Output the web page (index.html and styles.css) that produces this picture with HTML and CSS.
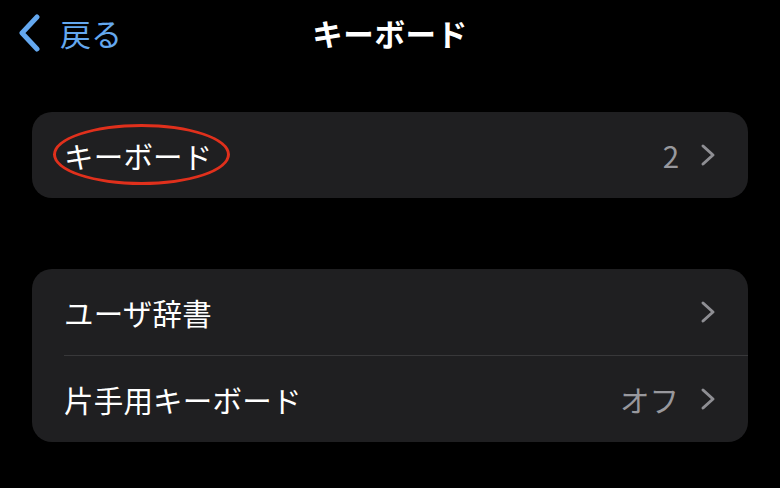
FILE: index.html
```html
<!DOCTYPE html>
<html lang="ja">
<head>
<meta charset="utf-8">
<link rel="stylesheet" href="styles.css">
</head>
<body>
<header class="nav">
  <div class="back">
    <svg class="back-chev" width="24" height="38" viewBox="0 0 24 38"><path d="M20 3 L5 19 L20 35" fill="none" stroke="#64a8ef" stroke-width="5" stroke-linecap="round" stroke-linejoin="round"/></svg>
    <span class="back-text">戻る</span>
  </div>
  <div class="title">キーボード</div>
  <div></div>
</header>
<main class="content">
  <section class="card">
    <div class="row">
      <div class="row-inner">
        <span class="label marked">キーボード</span>
        <span class="value">2</span>
        <svg class="chev" width="16" height="24" viewBox="0 0 16 24"><path d="M3 3 L13 12 L3 21" fill="none" stroke="#8e8e93" stroke-width="3" stroke-linecap="round" stroke-linejoin="round"/></svg>
      </div>
    </div>
  </section>
  <section class="card">
    <div class="row">
      <div class="row-inner">
        <span class="label">ユーザ辞書</span>
        <svg class="chev" width="16" height="24" viewBox="0 0 16 24"><path d="M3 3 L13 12 L3 21" fill="none" stroke="#8e8e93" stroke-width="3" stroke-linecap="round" stroke-linejoin="round"/></svg>
      </div>
    </div>
    <div class="row">
      <div class="row-inner sep">
        <span class="label">片手用キーボード</span>
        <span class="value">オフ</span>
        <svg class="chev" width="16" height="24" viewBox="0 0 16 24"><path d="M3 3 L13 12 L3 21" fill="none" stroke="#8e8e93" stroke-width="3" stroke-linecap="round" stroke-linejoin="round"/></svg>
      </div>
    </div>
  </section>
</main>
</body>
</html>
```
FILE: styles.css
```css
html, body {
  margin: 0;
  padding: 0;
  background: #000;
}
body {
  width: 780px;
  height: 488px;
  overflow: hidden;
  font-family: "Noto Sans CJK JP", "Noto Sans", sans-serif;
  color: #fff;
}
.nav {
  height: 66px;
  display: grid;
  grid-template-columns: 1fr auto 1fr;
  align-items: center;
}
.back {
  display: flex;
  align-items: center;
  padding-left: 17px;
  gap: 19px;
}
.back-chev {
  display: block;
}
.back-text {
  color: #64a8ef;
  font-size: 31px;
  line-height: 40px;
}
.title {
  font-size: 30.5px;
  font-weight: 700;
  line-height: 40px;
  letter-spacing: 0.6px;
}
.content {
  padding: 46px 32px 0;
  display: flex;
  flex-direction: column;
  gap: 71px;
}
.card {
  background: #1f1f21;
  border-radius: 20px;
  overflow: hidden;
}
.row {
  padding-left: 32px;
}
.row-inner {
  height: 86px;
  box-sizing: border-box;
  display: flex;
  align-items: center;
  padding-right: 32px;
}
.row-inner.sep {
  border-top: 1px solid #38383a;
  height: 87px;
}
.label {
  font-size: 29.5px;
  line-height: 40px;
  flex: 1;
  position: relative;
  letter-spacing: 0.2px;
}
.marked {
  flex: 0 0 auto;
  margin-right: auto;
}
.marked::after {
  content: "";
  position: absolute;
  left: -11px;
  top: -11px;
  width: 177px;
  height: 61px;
  box-sizing: border-box;
  border: 3px solid #e0301c;
  border-radius: 50%;
}
.value {
  font-size: 29.5px;
  line-height: 40px;
  color: #98989d;
  margin-right: 21px;
}
.chev {
  display: block;
}
```
